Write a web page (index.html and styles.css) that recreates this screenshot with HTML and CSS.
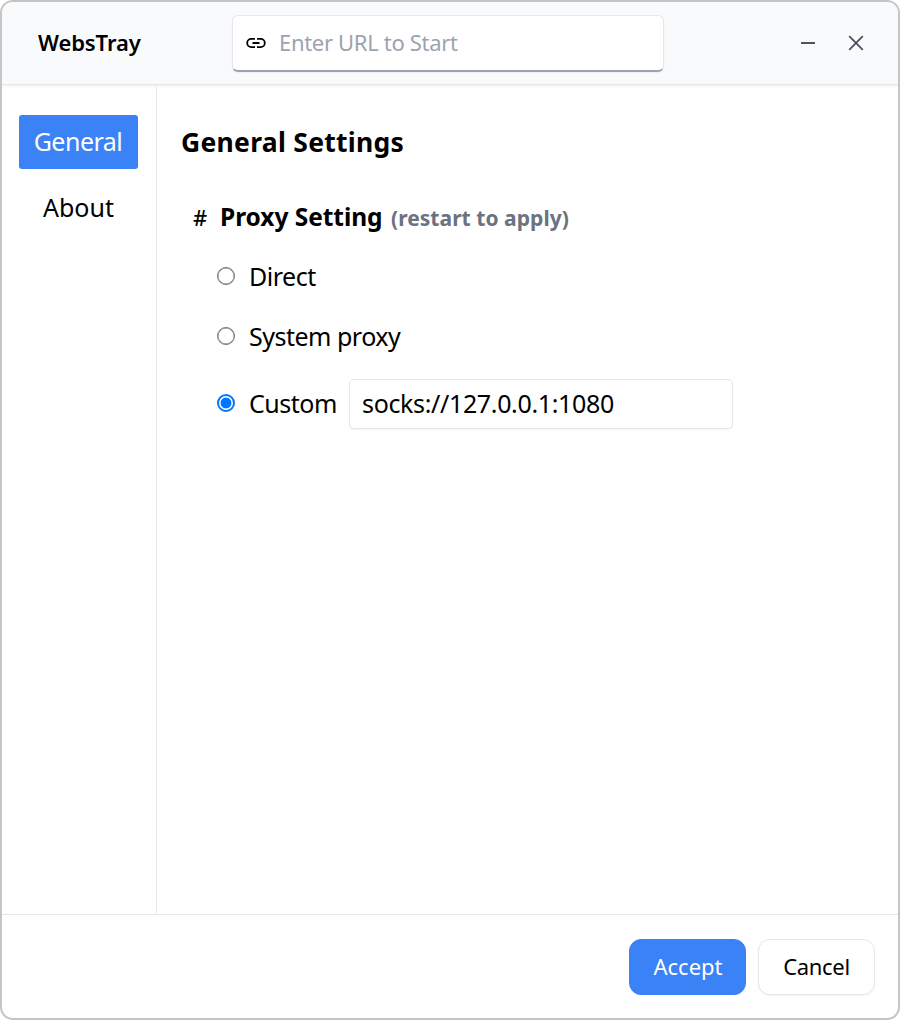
FILE: index.html
```html
<!DOCTYPE html>
<html lang="en">
<head>
<meta charset="utf-8">
<title>WebsTray</title>
<link rel="stylesheet" href="styles.css">
</head>
<body>
<div class="window">
  <header class="titlebar">
    <div class="brand">WebsTray</div>
    <label class="url-box">
      <svg class="link-icon" width="20" height="20" viewBox="0 0 20 20" fill="none" stroke="currentColor" stroke-width="1.8"><path d="M9 5.9H5.3a4.1 4.1 0 0 0 0 8.2H9M11 5.9h3.7a4.1 4.1 0 0 1 0 8.2H11M6.5 10h7"/></svg>
      <input class="url-input" type="text" placeholder="Enter URL to Start">
    </label>
    <div class="controls">
      <svg width="16" height="16" viewBox="0 0 16 16"><path d="M1 8h14" stroke="currentColor" stroke-width="2"/></svg>
      <svg width="16" height="16" viewBox="0 0 16 16"><path d="M1.2 1.2l13.6 13.6M14.8 1.2L1.2 14.8" stroke="currentColor" stroke-width="1.9"/></svg>
    </div>
  </header>
  <div class="body">
    <nav class="sidebar">
      <a class="tab tab-active">General</a>
      <a class="tab">About</a>
    </nav>
    <main class="content">
      <h1 class="heading">General Settings</h1>
      <h2 class="section"><span class="hash">#</span><span class="section-name">Proxy Setting</span><span class="note">(restart to apply)</span></h2>
      <div class="options">
        <label class="option"><span class="radio"></span><span class="option-text">Direct</span></label>
        <label class="option"><span class="radio"></span><span class="option-text">System proxy</span></label>
        <label class="option option-custom"><span class="radio radio-on"></span><span class="option-text">Custom</span><input class="proxy-input" type="text" value="socks://127.0.0.1:1080"></label>
      </div>
    </main>
  </div>
  <footer class="footer">
    <button class="btn btn-primary">Accept</button>
    <button class="btn btn-cancel">Cancel</button>
  </footer>
</div>
</body>
</html>
```
FILE: styles.css
```css
* { box-sizing: border-box; }
body {
  margin: 0;
  background: #fff;
  color: #000;
  font-family: "Noto Sans", "Open Sans", sans-serif;
}
.window {
  display: flex;
  flex-direction: column;
  width: 900px;
  height: 1020px;
  border: 2px solid #c5c5c5;
  border-radius: 13px;
  overflow: hidden;
}
.titlebar {
  display: flex;
  align-items: center;
  flex: none;
  height: 83px;
  padding: 0 34px 0 36px;
  background: #f9fafb;
  border-bottom: 1px solid #e5e7eb;
  box-shadow: 0 1px 3px rgba(0, 0, 0, .07);
}
.brand { width: 194px; padding-bottom: 2px; font-size: 22px; font-weight: 600; letter-spacing: -.1px; white-space: nowrap; }
.url-box {
  display: flex;
  align-items: center;
  width: 432px;
  height: 57px;
  margin-top: 1px;
  padding: 0 14px;
  background: #fff;
  border: 1px solid #e5e7eb;
  border-bottom: 2px solid #9ca3af;
  border-radius: 6px;
  box-shadow: 0 1px 2px rgba(0, 0, 0, .05);
}
.link-icon { flex: none; width: 20px; margin-left: -1px; }
.url-input {
  flex: 1;
  min-width: 0;
  margin-left: 13px;
  padding: 0 0 3px;
  border: 0;
  outline: 0;
  background: none;
  font: 22px "Noto Sans", sans-serif;
  letter-spacing: -.32px;
}
.url-input::placeholder { color: #9ca3af; }
.controls { display: flex; gap: 32px; margin-left: auto; color: #4b5563; }
.body { display: flex; flex: 1; min-height: 0; }
.sidebar {
  display: flex;
  flex-direction: column;
  gap: 12px;
  width: 155px;
  padding: 30px 18px 0 17px;
  border-right: 1px solid #e5e7eb;
}
.tab {
  display: flex;
  align-items: center;
  justify-content: center;
  height: 54px;
  padding-bottom: 2px;
  border-radius: 3px;
  font-size: 25px;
}
.tab-active { padding-right: 1px; background: #3b82f6; color: #fff; letter-spacing: -.5px; }
.content { flex: 1; padding: 38px 24px 0; }
.heading { margin: 0; font-size: 26.5px; line-height: 38px; font-weight: 700; letter-spacing: .28px; }
.section {
  display: flex;
  align-items: baseline;
  margin: 37px 0 0 12px;
  font-size: 24.5px;
  line-height: 38px;
  font-weight: 700;
  white-space: nowrap;
}
.hash { width: 27px; font-size: 22px; font-weight: 500; }
.section-name { width: 163px; letter-spacing: -.05px; }
.note { margin-left: 8px; font-size: 21px; letter-spacing: .05px; color: #6b7280; }
.options { display: flex; flex-direction: column; padding: 10px 0 0 36px; }
.option { display: flex; align-items: center; height: 60px; font-size: 25px; letter-spacing: -.5px; white-space: nowrap; }
.option-text { padding-bottom: 3px; }
.option-custom { height: 74px; }
.radio {
  flex: none;
  width: 18px;
  height: 18px;
  margin: 0 14px 2px 0;
  border: 1.5px solid #767676;
  border-radius: 50%;
  box-shadow: inset 0 0 0 .4px #767676;
}
.radio-on { border: 2px solid #0075ff; box-shadow: none; background: radial-gradient(circle, #0075ff 5px, #fff 5.8px); }
.proxy-input {
  width: 384px;
  height: 50px;
  margin-left: auto;
  margin-right: 141px;
  padding: 0 12px 3px;
  border: 1px solid #e5e7eb;
  border-radius: 5px;
  outline: 0;
  box-shadow: 0 1px 2px rgba(0, 0, 0, .05);
  font: 25px "Noto Sans", sans-serif;
  letter-spacing: -.35px;
}
.footer {
  display: flex;
  justify-content: flex-end;
  gap: 12px;
  flex: none;
  height: 104px;
  padding: 24px 23px 0 0;
  border-top: 1px solid #e5e7eb;
}
.btn {
  width: 117px;
  height: 56px;
  padding: 0 0 2px;
  background: #fff;
  color: #000;
  border: 1px solid #e5e7eb;
  border-radius: 12px;
  box-shadow: 0 1px 2px rgba(0, 0, 0, .05);
  font: 22px "Noto Sans", sans-serif;
}
.btn-primary { padding-left: 1px; background: #3b82f6; border-color: #3b82f6; color: #fff; box-shadow: none; }
.btn-cancel { letter-spacing: -.3px; }
```
